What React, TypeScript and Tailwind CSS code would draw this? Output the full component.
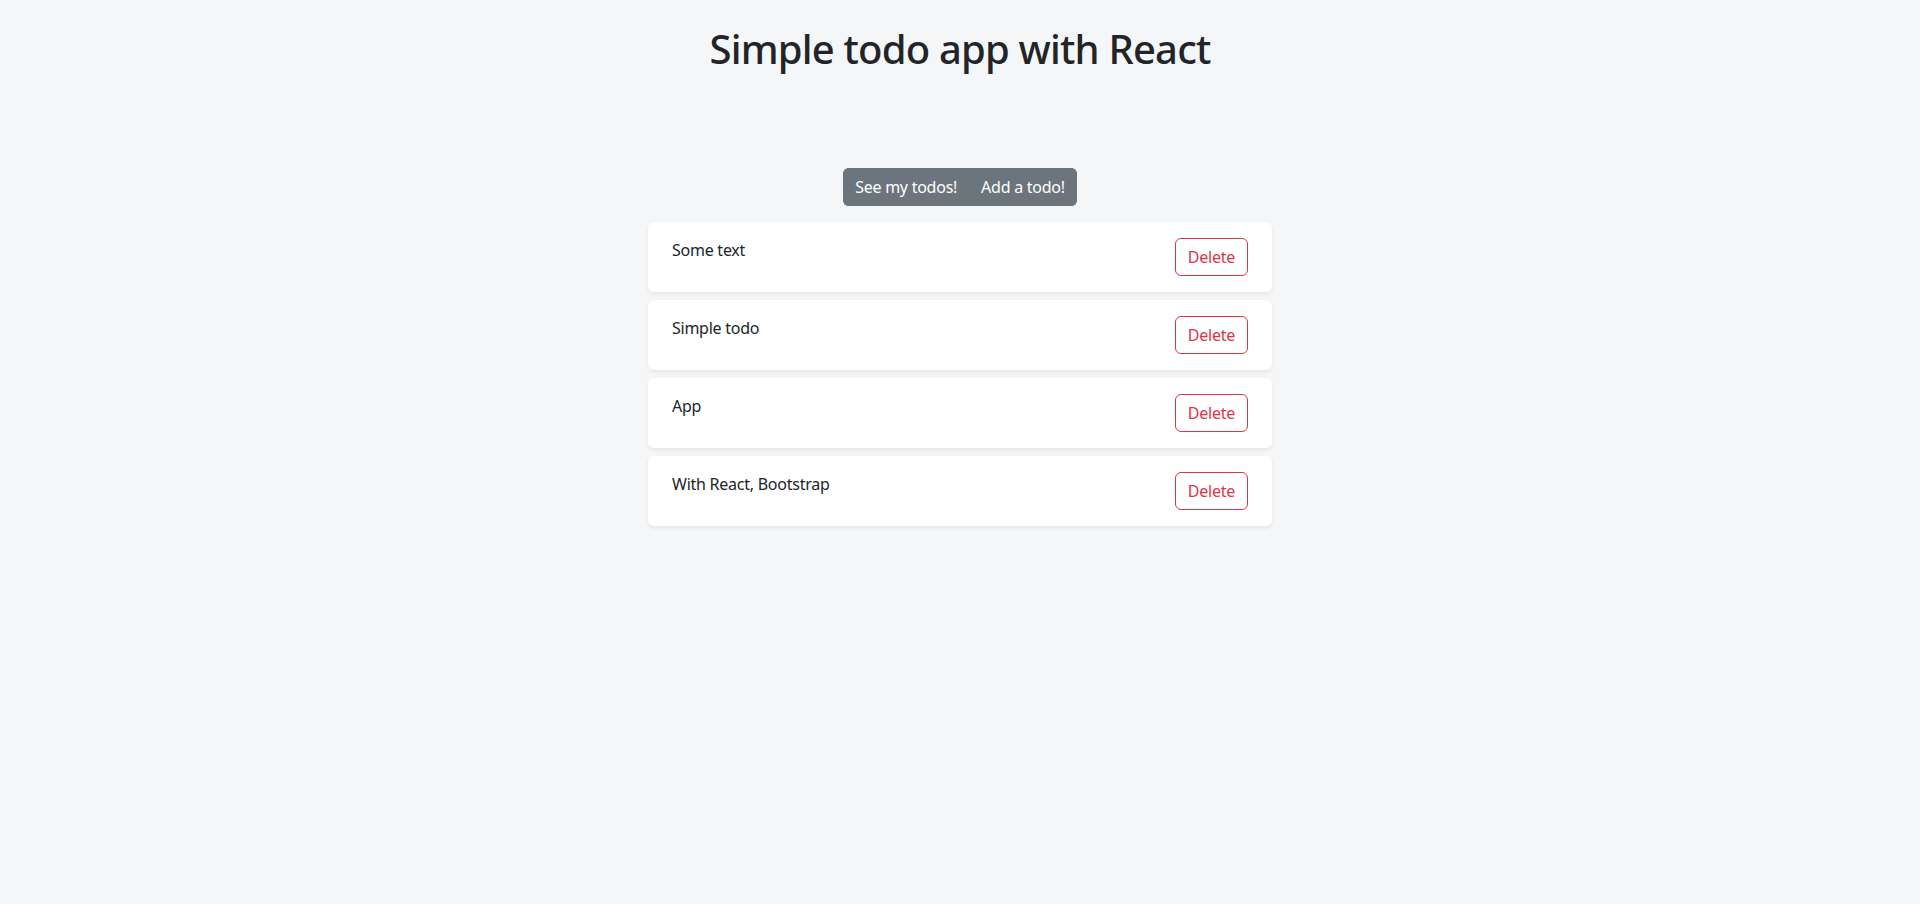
import React from "react";

const todos = ["Some text", "Simple todo", "App", "With React, Bootstrap"];

export default function App() {
  return (
    <div className="min-h-[904px] bg-[#f5f6f8] text-[#212529] font-['Noto_Sans',sans-serif]">
      <div className="flex flex-col items-center pt-[25px]">
        <h1 className="text-[40px] leading-[48px] font-medium tracking-[-0.8px]">Simple todo app with React</h1>
        <div className="mt-[95px] flex rounded-[6px] overflow-hidden bg-[#6c757d] text-white text-[16px] leading-[24px] tracking-[-0.25px]">
          <button className="px-[12px] py-[7px] bg-[#6c757d]">See my todos!</button>
          <button className="px-[12px] py-[7px] bg-[#6c757d]">Add a todo!</button>
        </div>
        <div className="mt-[16px] w-[624px] flex flex-col gap-[8px]">
          {todos.map((t) => (
            <div
              key={t}
              className="bg-white rounded-[6px] shadow-[0_2px_4px_rgba(0,0,0,0.075)] px-[24px] py-[16px] flex justify-between items-start"
            >
              <span className="text-[16px] leading-[24px] tracking-[-0.25px]">{t}</span>
              <button className="border border-[#dc3545] text-[#dc3545] rounded-[6px] px-[12px] py-[6px] text-[16px] leading-[24px] tracking-[-0.25px]">
                Delete
              </button>
            </div>
          ))}
        </div>
      </div>
    </div>
  );
}
